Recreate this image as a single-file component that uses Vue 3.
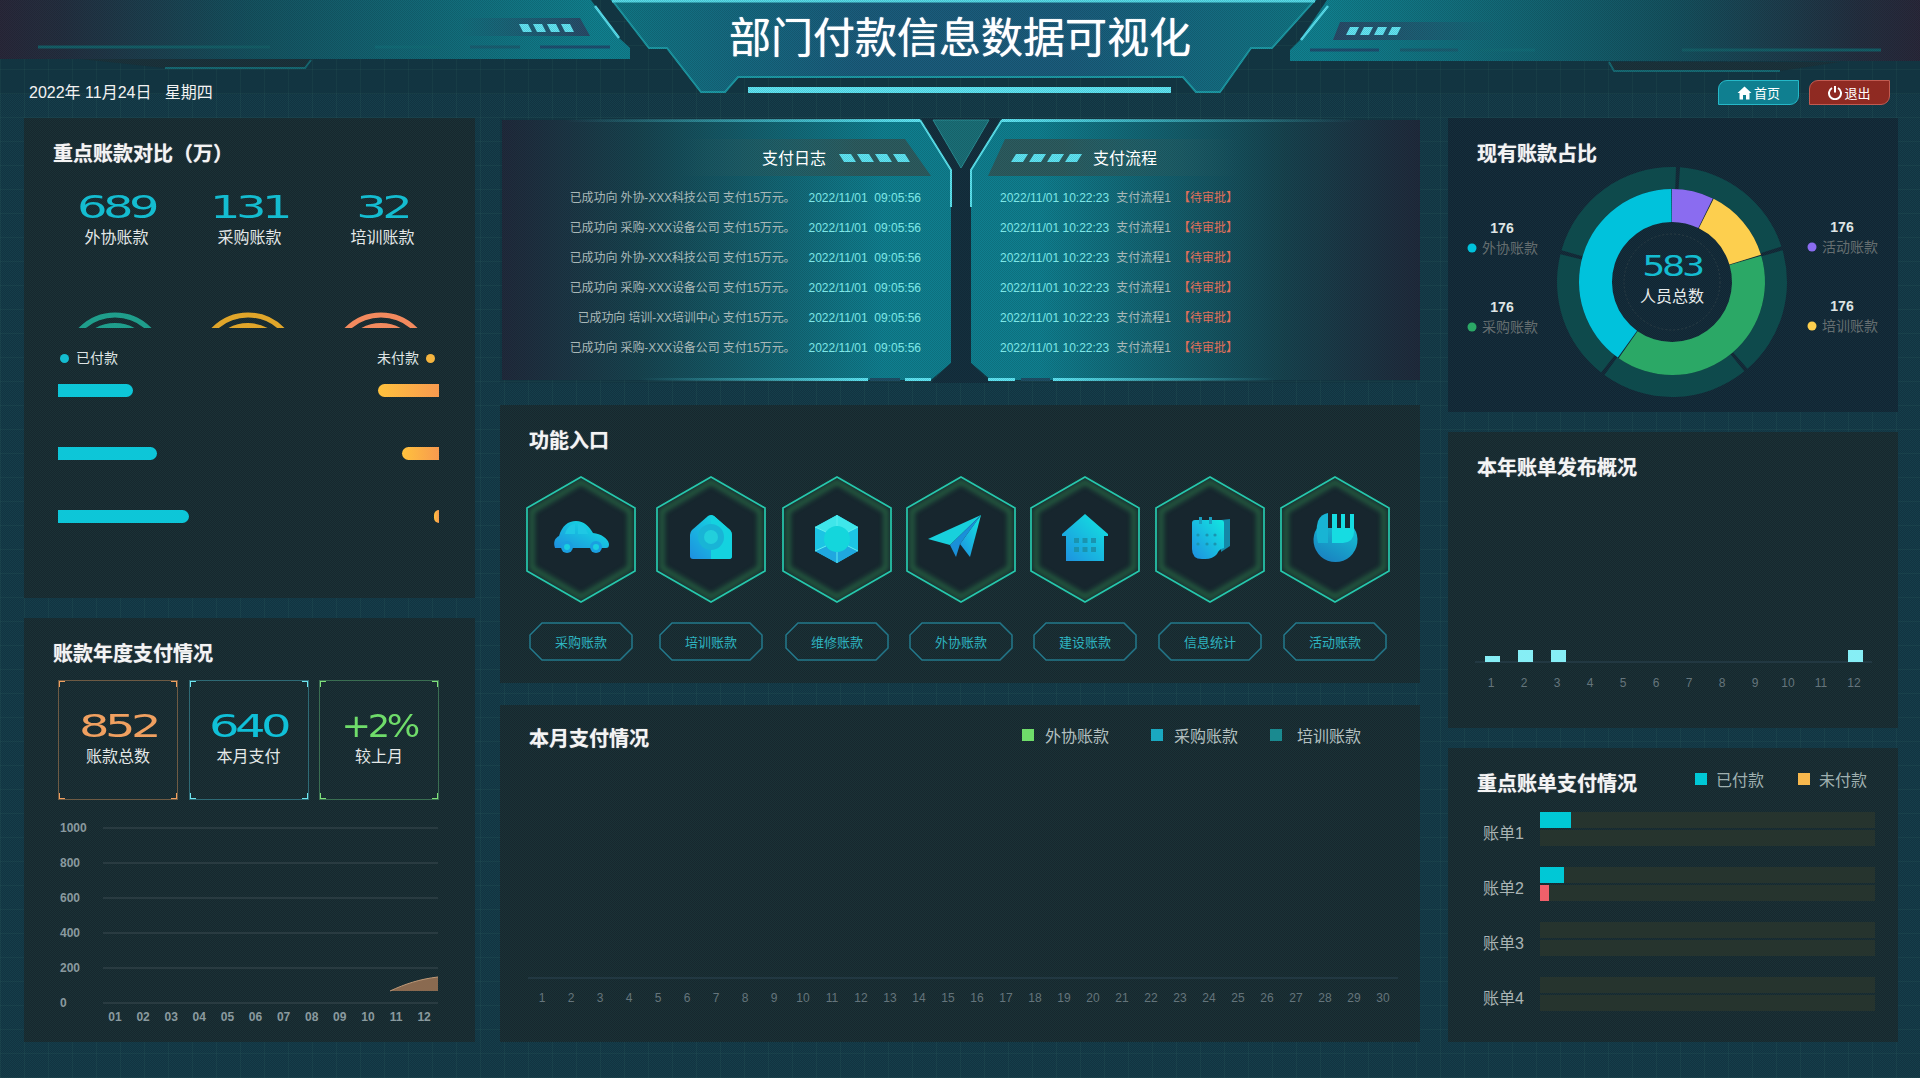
<script setup>
// full circle as a path, so icon shapes can all live in one list
function dot(cx, cy, r) {
  return `M${cx - r} ${cy}a${r} ${r} 0 1 0 ${2 * r} 0a${r} ${r} 0 1 0 ${-2 * r} 0Z`
}

function ringSeg(r0, r1, a0, a1) {
  const rad = (a) => ((a - 90) * Math.PI) / 180
  const pt = (r, a) => `${(224 + r * Math.cos(rad(a))).toFixed(2)} ${(164 + r * Math.sin(rad(a))).toFixed(2)}`
  const big = a1 - a0 > 180 ? 1 : 0
  return `M${pt(r1, a0)}A${r1} ${r1} 0 ${big} 1 ${pt(r1, a1)}L${pt(r0, a1)}A${r0} ${r0} 0 ${big} 0 ${pt(r0, a0)}Z`
}

const grad = 'url(#icon-grad)'
const win = '#1a94b0'

const entries = [
  {
    label: '采购账款',
    shapes: [
      { d: 'M29 72C27 66 29 62 33 60C36 50 42 45 50 45C58 45 63 50 67 57C75 58 82 62 83 68C83 71 82 72 80 72Z', fill: grad },
      { d: 'M39 58C41 51 45 48 49 48L49 58Z', fill: '#1fc8e4' },
      { d: 'M52 48C57 48 60 52 62 58L52 58Z', fill: '#1fc8e4' },
      { d: dot(41, 71, 6), fill: '#1a9fe0' },
      { d: dot(41, 71, 3), fill: '#19cfe0' },
      { d: dot(70, 71, 6), fill: '#1a9fe0' },
      { d: dot(70, 71, 3), fill: '#19cfe0' },
    ],
  },
  {
    label: '培训账款',
    shapes: [
      { d: 'M52 40Q55 38 58 40L74 54Q76 56 76 59L76 80Q76 83 73 83L37 83Q34 83 34 80L34 59Q34 56 36 54Z', fill: grad },
      { d: 'M55 39L58 40L74 54Q76 56 76 59L76 80Q76 83 73 83L55 83Z', fill: '#14d2df' },
      { d: dot(55, 61, 13), fill: '#19b4d6' },
      { d: dot(55, 61, 7), fill: '#22cfdc' },
    ],
  },
  {
    label: '维修账款',
    shapes: [
      { d: 'M55 39L76 51L76 75L55 87L33 75L33 51Z', fill: '#1cc4e4' },
      { d: 'M55 39L76 51L66 56L55 50L44 56L33 51Z', fill: '#3fe6ea' },
      { d: 'M33 75L44 70L55 76L66 70L76 75L55 87Z', fill: '#1fa8e0' },
      { d: dot(55, 63, 13), fill: '#14d6dc' },
      { d: 'M55 39L55 50M76 51L66 56M76 75L66 70M55 87L55 76M33 75L44 70M33 51L44 56', fill: 'none', stroke: '#5eeef0' },
    ],
  },
  {
    label: '外协账款',
    shapes: [
      { d: 'M22 63L75 39L44 69Z', fill: '#18d0dc' },
      { d: 'M75 39L44 69L50 81L54 68Z', fill: '#1a8fd8' },
      { d: 'M75 39L54 68L64 81Z', fill: grad },
    ],
  },
  {
    label: '建设账款',
    shapes: [
      { d: 'M55 38L78 58L78 60L74 60L74 85L36 85L36 60L32 60L32 58Z', fill: grad },
      ...[44, 52.5, 61].flatMap((x) =>
        [62, 71].map((y) => ({ d: `M${x} ${y}h5v5h-5Z`, fill: win })),
      ),
    ],
  },
  {
    label: '信息统计',
    shapes: [
      { d: 'M66 44L75 43L75 70L66 76Z', fill: '#1488a8' },
      { d: 'M40 44L66 44Q69 44 69 47L69 72Q64 73 62 78Q58 83 50 83L47 83Q37 83 37 73L37 47Q37 44 40 44Z', fill: grad },
      { d: 'M44 41h3v7h-3Z', fill: '#1a9fc0' },
      { d: 'M54 41h3v7h-3Z', fill: '#1a9fc0' },
      ...[43, 52, 60].flatMap((x) =>
        [59, 68].map((y) => ({ d: dot(x, y, 1.6), fill: win })),
      ),
    ],
  },
  {
    label: '活动账款',
    shapes: [
      { d: 'M37.1 52A22 22 0 1 0 73.9 52Z', fill: 'url(#icon-dark)' },
      { d: 'M48 37L48 67L38 67Q35 55 38 45Q41 38 48 37Z', fill: '#18b4d4' },
      { d: 'M52 38L57 38L57 52L61 52L61 38L65 38L65 52L70 52L70 38L74 38L74 56Q74 66 63 67L52 67Z', fill: '#16dce2' },
    ],
  },
]

const logLeft = [
  '已成功向 外协-XXX科技公司 支付15万元。',
  '已成功向 采购-XXX设备公司 支付15万元。',
  '已成功向 外协-XXX科技公司 支付15万元。',
  '已成功向 采购-XXX设备公司 支付15万元。',
  '已成功向 培训-XX培训中心 支付15万元。',
  '已成功向 采购-XXX设备公司 支付15万元。',
]

const topStats = [
  { num: '689', label: '外协账款', arc: '#1f9e8c' },
  { num: '131', label: '采购账款', arc: '#e0a62a' },
  { num: '32', label: '培训账款', arc: '#f28a5e' },
]

const payBars = [
  { paid: 75, unpaid: 61 },
  { paid: 99, unpaid: 37 },
  { paid: 131, unpaid: 5 },
]

const cards = [
  { num: '852', label: '账款总数', cls: 'card-orange' },
  { num: '640', label: '本月支付', cls: 'card-cyan' },
  { num: '+2%', label: '较上月', cls: 'card-green' },
]

const yTicks = [
  { v: '1000', y: 12 },
  { v: '800', y: 47 },
  { v: '600', y: 82 },
  { v: '400', y: 117 },
  { v: '200', y: 152 },
  { v: '0', y: 187 },
]
const months = Array.from({ length: 12 }, (_, i) => String(i + 1).padStart(2, '0'))
const yearBars = [6, 12, 12, 0, 0, 0, 0, 0, 0, 0, 0, 12]
const days = Array.from({ length: 30 }, (_, i) => i + 1)

const monthLegend = [
  { label: '外协账款', cls: 'sw-green' },
  { label: '采购账款', cls: 'sw-blue' },
  { label: '培训账款', cls: 'sw-teal' },
]

const trackSegs = [
  [4, 72],
  [74, 139],
  [141, 216],
  [218, 284],
  [286, 362],
].map(([a, b]) => ringSeg(93, 115, a, b))

const donutSegs = [
  { d: ringSeg(60, 93, 0, 26), fill: '#8a6cf0' },
  { d: ringSeg(60, 93, 26.6, 73), fill: '#fdcf4e' },
  { d: ringSeg(60, 93, 73.6, 215), fill: '#2ba866' },
  { d: ringSeg(60, 93, 215.6, 359.6), fill: '#00c2dc' },
]

const donutLegend = [
  { x: 54, y: 115, dot: 24, label: '外协账款', color: '#00c2dc' },
  { x: 54, y: 194, dot: 24, label: '采购账款', color: '#2ba866' },
  { x: 394, y: 114, dot: 364, label: '活动账款', color: '#8a6cf0' },
  { x: 394, y: 193, dot: 364, label: '培训账款', color: '#fdcf4e' },
]

const bills = [
  { label: '账单1', paid: 31, unpaid: 0 },
  { label: '账单2', paid: 24, unpaid: 9 },
  { label: '账单3', paid: 0, unpaid: 0 },
  { label: '账单4', paid: 0, unpaid: 0 },
]
</script>

<template>
  <div class="page">
    <svg class="defs" width="0" height="0">
      <defs>
        <linearGradient id="icon-grad" x1="1" y1="0" x2="0" y2="1">
          <stop offset="0" stop-color="#12e8e0" />
          <stop offset="1" stop-color="#1e8fe0" />
        </linearGradient>
        <linearGradient id="icon-dark" x1="0.8" y1="0.1" x2="0.2" y2="1">
          <stop offset="0" stop-color="#16b8d0" />
          <stop offset="1" stop-color="#1a7fc0" />
        </linearGradient>
        <filter id="hex-blur" x="-10%" y="-10%" width="120%" height="120%">
          <feGaussianBlur stdDeviation="2.5" />
        </filter>
        <pattern id="dither" width="2" height="2" patternUnits="userSpaceOnUse">
          <rect width="1" height="1" fill="#000" fill-opacity="0.12" />
          <rect x="1" y="1" width="1" height="1" fill="#000" fill-opacity="0.12" />
        </pattern>
      </defs>
    </svg>

    <header class="top">
      <svg class="top-art" width="1920" height="118" viewBox="0 0 1920 118">
        <defs>
          <linearGradient id="head-l" x1="0" x2="1" y1="0" y2="0">
            <stop offset="0" stop-color="#29283a" />
            <stop offset="0.1" stop-color="#232f40" />
            <stop offset="0.4" stop-color="#145260" />
            <stop offset="0.95" stop-color="#10808f" />
          </linearGradient>
          <linearGradient id="head-r" x1="1" x2="0" y1="0" y2="0">
            <stop offset="0" stop-color="#29283a" />
            <stop offset="0.1" stop-color="#232f40" />
            <stop offset="0.4" stop-color="#145260" />
            <stop offset="0.95" stop-color="#10808f" />
          </linearGradient>
          <linearGradient id="head-c" x1="0" x2="1" y1="0" y2="0">
            <stop offset="0" stop-color="#107684" />
            <stop offset="0.35" stop-color="#1a5c7c" />
            <stop offset="0.65" stop-color="#1a5c7c" />
            <stop offset="1" stop-color="#107684" />
          </linearGradient>
          <linearGradient id="glow-l" x1="0" x2="1" y1="0" y2="0">
            <stop offset="0" stop-color="#2bb0c0" stop-opacity="0.5" />
            <stop offset="1" stop-color="#62e8f2" />
          </linearGradient>
          <linearGradient id="glow-r" x1="1" x2="0" y1="0" y2="0">
            <stop offset="0" stop-color="#2bb0c0" stop-opacity="0.5" />
            <stop offset="1" stop-color="#62e8f2" />
          </linearGradient>
          <linearGradient id="plate-l" x1="1" x2="0" y1="0" y2="0">
            <stop offset="0" stop-color="#2a4a68" />
            <stop offset="1" stop-color="#2a4a68" stop-opacity="0" />
          </linearGradient>
          <linearGradient id="plate-r" x1="0" x2="1" y1="0" y2="0">
            <stop offset="0" stop-color="#2a4a68" />
            <stop offset="1" stop-color="#2a4a68" stop-opacity="0" />
          </linearGradient>
        </defs>

        <!-- left wing -->
        <polygon points="0,0 591,0 618,37 630,48 630,59 0,59" fill="url(#head-l)" />
        <polygon points="80,59 311,59 305,68 165,68" fill="#1b333c" />
        <polyline points="165,68 305,68 311,60" fill="none" stroke="#176a74" stroke-width="2" />
        <line x1="311" y1="58.5" x2="630" y2="58.5" stroke="url(#glow-l)" stroke-width="3" />
        <line x1="595" y1="6" x2="619" y2="38" stroke="#58dfee" stroke-width="2.5" />
        <polygon points="460,18 580,18 590,36 460,36" fill="url(#plate-l)" />
        <polygon v-for="x in [519, 533, 547, 561]" :key="x" :points="`${x},24 ${x + 9},24 ${x + 13},32 ${x + 4},32`" fill="#62e6f5" />
        <line x1="38" y1="47" x2="270" y2="47" stroke="#155f68" stroke-width="3" />
        <line x1="375" y1="47" x2="440" y2="47" stroke="#126c78" stroke-width="3" />
        <line x1="470" y1="47" x2="520" y2="47" stroke="#1a5f72" stroke-width="3" />
        <line x1="540" y1="47" x2="610" y2="47" stroke="#1f4f70" stroke-width="3" />

        <!-- right wing -->
        <polygon points="1327,0 1920,0 1920,61 1290,61 1290,50 1300,40" fill="url(#head-r)" />
        <polygon points="1609,62 1840,62 1780,71 1614,71" fill="#1b333c" />
        <polyline points="1609,62 1614,71 1780,71" fill="none" stroke="#176a74" stroke-width="2" />
        <line x1="1290" y1="60.5" x2="1609" y2="60.5" stroke="url(#glow-r)" stroke-width="3" />
        <line x1="1328" y1="6" x2="1301" y2="40" stroke="#58dfee" stroke-width="2.5" />
        <polygon points="1340,22 1500,22 1500,40 1333,40" fill="url(#plate-r)" />
        <polygon v-for="x in [1346, 1360, 1374, 1388]" :key="x" :points="`${x + 4},27 ${x + 13},27 ${x + 9},35 ${x},35`" fill="#62e6f5" />
        <line x1="1682" y1="50" x2="1881" y2="50" stroke="#155f68" stroke-width="3" />
        <line x1="1310" y1="50" x2="1379" y2="50" stroke="#1f4f70" stroke-width="3" />
        <line x1="1400" y1="50" x2="1458" y2="50" stroke="#1a5f72" stroke-width="3" />
        <line x1="1480" y1="50" x2="1535" y2="50" stroke="#126c78" stroke-width="3" />

        <!-- title plate -->
        <polygon points="612,0 1315,0 1272,48 1251,48 1220,92 1196,92 1183,77 738,77 725,92 701,92 667,48 649,48" fill="url(#head-c)" stroke="#1d9aa6" stroke-width="2" />
        <line x1="612" y1="1" x2="1315" y2="1" stroke="#55dbe8" stroke-width="3" />
        <rect x="748" y="87" width="423" height="6" fill="#5ee6f5" />
        <rect width="1920" height="94" fill="url(#dither)" />
      </svg>

      <h1 class="top-title">部门付款信息数据可视化</h1>

      <div class="top-meta">
        <span class="top-date">2022年 11月24日&nbsp;&nbsp;&nbsp;星期四</span>
        <div class="top-btns">
          <span class="top-btn top-btn-home">
            <svg width="15" height="14" viewBox="0 0 15 14"><path d="M7.5 0.5L14.5 7L12.5 7L12.5 13.5L9 13.5L9 9L6 9L6 13.5L2.5 13.5L2.5 7L0.5 7Z" fill="#fff" /></svg>
            首页
          </span>
          <span class="top-btn top-btn-exit">
            <svg width="14" height="15" viewBox="0 0 14 15"><path d="M4 3A6 6 0 1 0 10 3" fill="none" stroke="#fff" stroke-width="2" /><line x1="7" y1="1" x2="7" y2="7.5" stroke="#fff" stroke-width="2" /></svg>
            退出
          </span>
        </div>
      </div>
    </header>

    <main class="board">
      <!-- left column -->
      <section class="col col-left">
        <div class="panel">
          <h2 class="panel-title">重点账款对比（万）</h2>
          <div class="stat-row">
            <div v-for="s in topStats" :key="s.label" class="stat">
              <span class="tech tech-cyan">{{ s.num }}</span>
              <span class="stat-label">{{ s.label }}</span>
            </div>
          </div>
          <div class="arc-row">
            <svg v-for="s in topStats" :key="s.label" width="133" height="16" viewBox="0 0 133 16">
              <circle cx="65" cy="51" r="48" fill="none" :stroke="s.arc" stroke-width="5" />
              <circle cx="65" cy="51" r="36" fill="none" :stroke="s.arc" stroke-width="8" />
            </svg>
          </div>
          <div class="pay-legend">
            <span class="pay-key"><i class="pay-dot pay-dot-cyan"></i>已付款</span>
            <span class="pay-key">未付款<i class="pay-dot pay-dot-amber"></i></span>
          </div>
          <div class="pay-bars">
            <div v-for="(b, i) in payBars" :key="i" class="pay-row">
              <span class="pay-bar pay-bar-paid" :style="{ width: b.paid + 'px' }"></span>
              <span class="pay-bar pay-bar-unpaid" :style="{ width: b.unpaid + 'px' }"></span>
            </div>
          </div>
        </div>

        <div class="panel">
          <h2 class="panel-title">账款年度支付情况</h2>
          <div class="cards">
            <div v-for="c in cards" :key="c.label" class="card" :class="c.cls">
              <span class="tech">{{ c.num }}</span>
              <span class="stat-label">{{ c.label }}</span>
            </div>
          </div>
          <svg class="year-chart" width="425" height="215" viewBox="0 0 425 215">
            <g v-for="t in yTicks" :key="t.v">
              <line x1="53" :y1="t.y" x2="388" :y2="t.y" stroke="#3a4a50" />
              <text x="10" :y="t.y + 4" class="axis-text">{{ t.v }}</text>
            </g>
            <text v-for="(m, i) in months" :key="m" :x="65 + i * 28.1" y="205" text-anchor="middle" class="axis-text">{{ m }}</text>
            <path d="M340 175C355 168 370 163 388 161L388 175Z" fill="#8a6a50" />
            <path d="M340 175C355 168 370 163 388 161" fill="none" stroke="#c09a78" />
          </svg>
        </div>
      </section>

      <!-- center column -->
      <section class="col col-center">
        <div class="banner">
          <svg class="banner-art" width="920" height="265" viewBox="0 0 920 265">
            <defs>
              <linearGradient id="wing-l" x1="0" x2="1" y1="0" y2="0">
                <stop offset="0" stop-color="#202a3c" />
                <stop offset="0.3" stop-color="#17434f" />
                <stop offset="0.85" stop-color="#0f7f90" />
              </linearGradient>
              <linearGradient id="wing-r" x1="1" x2="0" y1="0" y2="0">
                <stop offset="0" stop-color="#202a3c" />
                <stop offset="0.3" stop-color="#17434f" />
                <stop offset="0.85" stop-color="#0f7f90" />
              </linearGradient>
              <linearGradient id="tab-l" x1="0" x2="1" y1="0" y2="0">
                <stop offset="0" stop-color="#2c5c60" stop-opacity="0" />
                <stop offset="0.7" stop-color="#2c5c60" />
              </linearGradient>
              <linearGradient id="tab-r" x1="1" x2="0" y1="0" y2="0">
                <stop offset="0" stop-color="#2c5c60" stop-opacity="0" />
                <stop offset="0.7" stop-color="#2c5c60" />
              </linearGradient>
              <linearGradient id="edge-l" x1="0" x2="1" y1="0" y2="0">
                <stop offset="0.15" stop-color="#4fdcea" stop-opacity="0" />
                <stop offset="1" stop-color="#5ee6f5" />
              </linearGradient>
              <linearGradient id="edge-r" x1="1" x2="0" y1="0" y2="0">
                <stop offset="0.15" stop-color="#4fdcea" stop-opacity="0" />
                <stop offset="1" stop-color="#5ee6f5" />
              </linearGradient>
            </defs>
            <polygon points="2,2 420,2 451,52 451,245 431,262 2,262" fill="url(#wing-l)" />
            <polygon points="920,2 502,2 471,52 471,245 491,262 920,262" fill="url(#wing-r)" />
            <polygon points="422,0 500,0 471,52 471,245 491,265 431,265 451,245 451,52" fill="#14303f" />
            <polygon points="433,2 489,2 461,50" fill="#1a6f78" stroke="#2a8f95" />
            <rect x="2" y="1" width="418" height="3" fill="url(#edge-l)" />
            <rect x="502" y="1" width="418" height="3" fill="url(#edge-r)" />
            <polyline points="420,2 451,52 451,89" fill="none" stroke="#5be4f0" stroke-width="2" />
            <polyline points="502,2 471,52 471,89" fill="none" stroke="#5be4f0" stroke-width="2" />
            <polygon points="180,21 405,21 431,58 180,58" fill="url(#tab-l)" />
            <polygon points="740,21 505,21 488,58 740,58" fill="url(#tab-r)" />
            <polygon v-for="x in [339, 357, 375, 393]" :key="x" :points="`${x},36 ${x + 12},36 ${x + 17},44 ${x + 5},44`" fill="#5ee6f5" />
            <polygon v-for="x in [511, 529, 547, 565]" :key="x" :points="`${x + 5},36 ${x + 17},36 ${x + 12},44 ${x},44`" fill="#5ee6f5" />
            <rect x="100" y="260" width="268" height="3" fill="url(#edge-l)" />
            <rect x="370" y="260" width="30" height="3" fill="#1f4f66" />
            <rect x="405" y="260" width="26" height="3" fill="#5ee6f5" />
            <rect x="488" y="260" width="27" height="3" fill="#5ee6f5" />
            <rect x="521" y="260" width="29" height="3" fill="#1f4f66" />
            <rect x="553" y="260" width="262" height="3" fill="url(#edge-r)" />
            <rect width="920" height="265" fill="url(#dither)" />
          </svg>
          <div class="banner-body">
            <div class="log log-left">
              <div class="log-head">支付日志</div>
              <div v-for="(line, i) in logLeft" :key="i" class="log-row">
                <span class="log-msg">{{ line }}</span>
                <span class="log-time">2022/11/01&nbsp;&nbsp;09:05:56</span>
              </div>
            </div>
            <div class="log log-right">
              <div class="log-head">支付流程</div>
              <div v-for="i in 6" :key="i" class="log-row">
                <span class="log-time">2022/11/01 10:22:23</span>
                <span class="log-msg">支付流程1</span>
                <span class="log-state">【待审批】</span>
              </div>
            </div>
          </div>
        </div>

        <div class="panel">
          <h2 class="panel-title">功能入口</h2>
          <div class="entries">
            <div v-for="e in entries" :key="e.label" class="entry">
              <svg width="110" height="127" viewBox="0 0 110 127">
                <polygon points="55,1 109,32 109,95 55,126 1,95 1,32" fill="#17262e" />
                <polygon points="55,6 104,35 104,92 55,121 6,92 6,35" fill="none" stroke="#2f8a50" stroke-width="5" opacity="0.55" filter="url(#hex-blur)" />
                <polygon points="55,1 109,32 109,95 55,126 1,95 1,32" fill="none" stroke="#26c8ad" stroke-width="1.7" />
                <path v-for="(s, i) in e.shapes" :key="i" :d="s.d" :fill="s.fill" :stroke="s.stroke" />
              </svg>
              <div class="entry-btn">
                <svg width="104" height="39" viewBox="0 0 104 39">
                  <polygon points="13,1 91,1 103,13 103,26 91,38 13,38 1,26 1,13" fill="none" stroke="#23798c" stroke-width="1.5" />
                </svg>
                <span>{{ e.label }}</span>
              </div>
            </div>
          </div>
        </div>

        <div class="panel panel-month">
          <div class="month-head">
            <h2 class="panel-title">本月支付情况</h2>
            <div class="month-legend">
              <span v-for="l in monthLegend" :key="l.label" class="month-key">
                <i class="swatch" :class="l.cls"></i>{{ l.label }}
              </span>
            </div>
          </div>
          <svg class="wide-chart month-chart" width="920" height="270" viewBox="0 0 920 270">
            <line x1="28" y1="224" x2="898" y2="224" stroke="#2c4552" />
            <text v-for="(d, i) in days" :key="d" :x="42 + i * 29" y="248" text-anchor="middle" class="axis-text axis-dim">{{ d }}</text>
          </svg>
        </div>
      </section>

      <!-- right column -->
      <section class="col col-right">
        <div class="panel panel-donut">
          <h2 class="panel-title">现有账款占比</h2>
          <svg class="donut" width="450" height="294" viewBox="0 0 450 294">
            <path v-for="(d, i) in trackSegs" :key="i" :d="d" fill="#0e4a4c" />
            <path v-for="(s, i) in donutSegs" :key="i" :d="s.d" :fill="s.fill" />
            <circle cx="224" cy="164" r="48" fill="none" stroke="#2a3c44" stroke-dasharray="2 2" />
            <text x="224" y="158" text-anchor="middle" class="donut-num" transform="translate(224 0) scale(1.3 1) translate(-224 0)">583</text>
            <text x="224" y="184" text-anchor="middle" class="donut-label">人员总数</text>
            <g v-for="l in donutLegend" :key="l.label">
              <text :x="l.x" :y="l.y" text-anchor="middle" class="donut-val">176</text>
              <circle :cx="l.dot" :cy="l.y + 15" r="4.5" :fill="l.color" />
              <text :x="l.dot + 10" :y="l.y + 20" class="donut-key">{{ l.label }}</text>
            </g>
          </svg>
        </div>

        <div class="panel panel-tall">
          <h2 class="panel-title">本年账单发布概况</h2>
          <svg class="wide-chart tall-chart" width="450" height="225" viewBox="0 0 450 225">
            <line x1="27" y1="181" x2="424" y2="181" stroke="#2c4552" />
            <rect v-for="(h, i) in yearBars" :key="i" :x="37 + i * 33" :y="181 - h" width="15" :height="h" fill="#86eef5" />
            <text v-for="(h, i) in yearBars" :key="i" :x="43 + i * 33" y="206" text-anchor="middle" class="axis-text axis-dim">{{ i + 1 }}</text>
          </svg>
        </div>

        <div class="panel">
          <div class="bill-head">
            <h2 class="panel-title">重点账单支付情况</h2>
            <div class="bill-legend">
              <span class="month-key"><i class="swatch sw-cyan"></i>已付款</span>
              <span class="month-key"><i class="swatch sw-amber"></i>未付款</span>
            </div>
          </div>
          <div class="bills">
            <div v-for="b in bills" :key="b.label" class="bill">
              <span class="bill-label">{{ b.label }}</span>
              <div class="bill-tracks">
                <div class="bill-track"><span class="bill-fill bill-fill-paid" :style="{ width: b.paid + 'px' }"></span></div>
                <div class="bill-track"><span class="bill-fill bill-fill-unpaid" :style="{ width: b.unpaid + 'px' }"></span></div>
              </div>
            </div>
          </div>
        </div>
      </section>
    </main>
  </div>
</template>

<style>
html, body { margin: 0; background: #15394a; }
</style>

<style scoped>
.page {
  --dither: repeating-conic-gradient(rgba(0, 0, 0, 0.12) 0 25%, rgba(30, 120, 80, 0.08) 0 50%);
  width: 1920px;
  height: 1078px;
  overflow: hidden;
  color: #fff;
  font-family: "Liberation Sans", "Noto Sans CJK SC", sans-serif;
  background-color: #153a4a;
  background-image:
    repeating-linear-gradient(0deg, rgba(120, 200, 160, 0.05) 0 1px, transparent 1px 24px),
    repeating-linear-gradient(90deg, rgba(120, 200, 160, 0.05) 0 1px, transparent 1px 24px),
    var(--dither);
  background-size: auto, auto, 2px 2px;
}
.defs { display: block; }

/* header */
.top {
  display: grid;
  height: 118px;
}
.top > * { grid-area: 1 / 1; }
.top-art { display: block; }
.top-title {
  margin: 14px 0 0;
  justify-self: center;
  align-self: start;
  font-size: 42px;
  line-height: 50px;
  font-weight: 400;
  text-shadow: 0 0 1px #fff;
}
.top-meta {
  align-self: start;
  margin-top: 80px;
  padding: 0 30px 0 29px;
  display: flex;
  justify-content: space-between;
  align-items: center;
}
.top-date {
  font-size: 16px;
  line-height: 25px;
  color: #f2f2f2;
}
.top-btns { display: flex; gap: 10px; }
.top-btn {
  width: 81px;
  height: 25px;
  box-sizing: border-box;
  display: flex;
  align-items: center;
  justify-content: center;
  gap: 2px;
  font-size: 13px;
  border: 1px solid;
  border-radius: 9px 0 9px 0;
}
.top-btn-home { background: #0f7f90; border-color: #25b8c8; }
.top-btn-exit { background: #8f2a22; border-color: #c25a50; }

/* board */
.board {
  display: grid;
  grid-template-columns: 476px 948px 450px;
  padding-left: 24px;
}
.col { display: flex; flex-direction: column; height: 924px; }
.col-left { gap: 20px; width: 451px; }
.col-left > :nth-child(1) { height: 480px; }
.col-left > :nth-child(2) { height: 424px; }
.col-center { gap: 22px; width: 920px; }
.col-center > :nth-child(1) { height: 265px; }
.col-center > :nth-child(2) { height: 278px; }
.col-center > :nth-child(3) { height: 337px; }
.col-right { gap: 20px; width: 450px; }
.col-right > :nth-child(1) { height: 294px; }
.col-right > :nth-child(2) { height: 296px; }
.col-right > :nth-child(3) { height: 294px; }

.panel {
  box-sizing: border-box;
  padding: 22px 26px 0;
  background-color: #1a2c34;
  background-image: var(--dither);
  background-size: 2px 2px;
}
.panel-title {
  margin: 0 0 0 3px;
  font-size: 20px;
  line-height: 28px;
  font-weight: 700;
  color: #f4f4f4;
  text-shadow: 0 0 1px rgba(255, 255, 255, 0.6);
}

/* techno digits */
.tech {
  display: inline-block;
  font-family: "DejaVu Sans", sans-serif;
  font-size: 32px;
  line-height: 40px;
  letter-spacing: -3px;
  transform: scaleX(1.5);
  color: #0fc0d6;
}
.tech-cyan { color: #14bcd0; }
.stat-label {
  font-size: 16px;
  line-height: 22px;
  color: #e4e8e8;
}

/* left: top panel */
.stat-row {
  display: grid;
  grid-template-columns: repeat(3, 133px);
  margin-top: 19px;
}
.stat {
  display: flex;
  flex-direction: column;
  align-items: center;
}
.arc-row {
  display: grid;
  grid-template-columns: repeat(3, 133px);
  margin-top: 63px;
}
.arc-row svg { display: block; }
.pay-legend {
  display: flex;
  justify-content: space-between;
  margin: 20px 14px 0 10px;
  font-size: 14px;
  line-height: 20px;
  color: #dfe4e4;
}
.pay-key { display: flex; align-items: center; gap: 7px; }
.pay-dot { width: 9px; height: 9px; border-radius: 50%; }
.pay-dot-cyan { background: #14bcd0; }
.pay-dot-amber { background: #f5b53f; }
.pay-bars { margin: 16px 10px 0 8px; }
.pay-row {
  display: flex;
  justify-content: space-between;
  height: 13px;
  margin-bottom: 50px;
}
.pay-bar { display: block; height: 13px; }
.pay-bar-paid { background: #0dc6d8; border-radius: 0 7px 7px 0; }
.pay-bar-unpaid {
  background: linear-gradient(90deg, #ffc23d, #f79a4f);
  border-radius: 7px 0 0 7px;
}

/* left: yearly panel */
.cards {
  display: grid;
  grid-template-columns: repeat(3, 120px);
  column-gap: 10.5px;
  margin: 12px 0 0 8px;
}
.card {
  --c: #f0a060;
  --d: rgba(240, 160, 96, 0.4);
  box-sizing: border-box;
  height: 120px;
  padding-top: 25px;
  display: flex;
  flex-direction: column;
  align-items: center;
  border: 1px solid var(--d);
  background:
    linear-gradient(var(--c), var(--c)) 0 0 / 6px 1px no-repeat,
    linear-gradient(var(--c), var(--c)) 0 0 / 1px 6px no-repeat,
    linear-gradient(var(--c), var(--c)) 100% 0 / 6px 1px no-repeat,
    linear-gradient(var(--c), var(--c)) 100% 0 / 1px 6px no-repeat,
    linear-gradient(var(--c), var(--c)) 0 100% / 6px 1px no-repeat,
    linear-gradient(var(--c), var(--c)) 0 100% / 1px 6px no-repeat,
    linear-gradient(var(--c), var(--c)) 100% 100% / 6px 1px no-repeat,
    linear-gradient(var(--c), var(--c)) 100% 100% / 1px 6px no-repeat;
}
.card-orange .tech { color: #f0a060; }
.card-cyan { --c: #6fe6f0; --d: rgba(80, 200, 220, 0.4); }
.card-cyan .tech { color: #10c0d8; }
.card-green { --c: #7fe07a; --d: rgba(110, 210, 130, 0.4); }
.card-green .tech { color: #6fdc6a; letter-spacing: -3px; transform: scaleX(1.1); }
.year-chart { display: block; margin: 16px 0 0 0; }

.axis-text {
  font-size: 12px;
  font-weight: 700;
  fill: #8a9a9f;
}
.axis-dim { fill: #65757c; font-weight: 400; }

/* banner */
.banner { display: grid; }
.banner > * { grid-area: 1 / 1; }
.banner-art { display: block; }
.banner-body {
  display: grid;
  grid-template-columns: 421px 420px;
  column-gap: 79px;
}
.log-head {
  margin: 29px 0 13px;
  font-size: 16px;
  line-height: 24px;
}
.log-left .log-head { text-align: right; padding-right: 95px; }
.log-right .log-head { padding-left: 93px; }
.log-row {
  display: flex;
  height: 30px;
  align-items: baseline;
  line-height: 28px;
  font-size: 12px;
  white-space: pre;
}
.log-left .log-row { justify-content: flex-end; gap: 13px; }
.log-right .log-row { gap: 7px; }
.log-msg { color: #a9b8b8; }
.log-left .log-msg { letter-spacing: -0.1px; }
.log-time { color: #7ee6e6; }
.log-state { color: #e0705a; }

/* entries */
.entries {
  display: flex;
  gap: 14px;
  margin-top: 21px;
}
.entry {
  width: 110px;
  display: flex;
  flex-direction: column;
  align-items: center;
}
.entry:nth-child(2) { margin-left: 6px; }
.entry:nth-child(3) { margin-left: 2px; }
.entry:nth-child(6), .entry:nth-child(7) { margin-left: 1px; }
.entry > svg { display: block; }
.entry-btn {
  display: grid;
  margin-top: 19px;
  place-items: center;
}
.entry-btn > * { grid-area: 1 / 1; }
.entry-btn svg { display: block; }
.entry-btn span {
  font-size: 13px;
  color: #2eb4c0;
}

/* month */
.panel-month { padding-top: 20px; }
.month-head {
  display: flex;
  justify-content: space-between;
  padding-right: 33px;
}
.month-legend { display: flex; margin-top: -4px; height: 28px; }
.month-key {
  display: flex;
  align-items: center;
  gap: 11px;
  font-size: 16px;
  color: #b4c0c0;
}
.month-key:nth-child(2) { margin-left: 42px; }
.month-key:nth-child(3) { margin-left: 32px; }
.month-key:nth-child(3) .swatch { margin-right: 4px; }
.swatch { width: 12px; height: 12px; }
.sw-green { background: #6fdc6a; }
.sw-blue { background: #1aa8c0; }
.sw-teal { background: #1a8a90; }
.sw-cyan { background: #00c8d6; }
.sw-amber { background: #f7b84d; }
.wide-chart { display: block; margin: 0 -26px; }
.month-chart { margin-top: 1px; }
.tall-chart { margin-top: -1px; }

/* donut */
.panel-donut { background-color: #14293a; }
.donut { display: block; margin: -50px -26px 0; }
.donut-num {
  font-family: "DejaVu Sans", sans-serif;
  font-size: 28px;
  letter-spacing: -2.5px;
  fill: #14bcd0;
}
.donut-label { font-size: 16px; fill: #e8ecec; }
.donut-val { font-size: 14px; font-weight: 700; fill: #dfe4e4; }
.donut-key { font-size: 14px; fill: #656e70; }

/* bills */
.bill-head {
  display: flex;
  justify-content: space-between;
  padding-right: 5px;
}
.bill-legend { display: flex; margin-top: -5px; height: 28px; }
.bill-legend .month-key { gap: 9px; color: #9fb0b0; }
.bill-legend .month-key:nth-child(2) { margin-left: 34px; }
.bills { margin: 14px -3px 0 0; }
.bill {
  display: flex;
  height: 34px;
  margin-bottom: 21px;
}
.bill-label {
  width: 66px;
  box-sizing: border-box;
  padding: 10px 0 0 9px;
  font-size: 16px;
  line-height: 24px;
  color: #aab4b4;
}
.bill-tracks {
  flex: 1;
  display: flex;
  flex-direction: column;
  gap: 2px;
}
.bill-track { height: 16px; background: #26342e; }
.bill-fill { display: block; height: 16px; }
.bill-fill-paid { background: #00c8d6; }
.bill-fill-unpaid { background: #f0606a; }
</style>
